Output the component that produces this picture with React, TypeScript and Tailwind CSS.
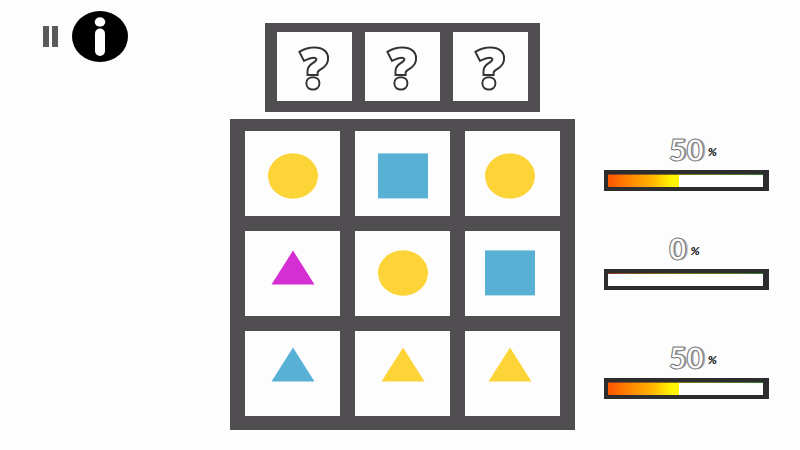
import React from "react";

type Kind = "circle" | "square" | "triangle";
type Tile = { kind: Kind; color: string };

const YELLOW = "#fdd437";
const BLUE = "#58b1d5";
const MAGENTA = "#d52fd3";

const tiles: Tile[] = [
  { kind: "circle", color: YELLOW },
  { kind: "square", color: BLUE },
  { kind: "circle", color: YELLOW },
  { kind: "triangle", color: MAGENTA },
  { kind: "circle", color: YELLOW },
  { kind: "square", color: BLUE },
  { kind: "triangle", color: BLUE },
  { kind: "triangle", color: YELLOW },
  { kind: "triangle", color: YELLOW },
];

const rowPadding = ["pt-[22px]", "pt-[19px]", "pt-4"];
const columnPadding = ["", "", "pr-[5px]"];

function Shape({ kind, color }: Tile) {
  return (
    <svg width="50" height="46" viewBox="0 0 50 46" fill={color} role="img" aria-label={kind}>
      {kind === "circle" && <ellipse cx="25" cy="23" rx="25" ry="22.8" />}
      {kind === "square" && <rect y="0.4" width="50" height="45" />}
      {kind === "triangle" && <path d="M25 0.5 46.5 34.5H3.5Z" />}
    </svg>
  );
}

function Mystery() {
  return (
    <div className="flex h-[69px] items-center justify-center bg-[#fefdfe]">
      <span className="font-['Open_Sans'] text-[54px] leading-[60px] font-extrabold text-white [paint-order:stroke_fill] [-webkit-text-stroke:4px_#333]">
        ?
      </span>
    </div>
  );
}

function Gauge({ value, name }: { value: number; name: string }) {
  return (
    <div className="flex w-[165px] flex-col">
      <div className="flex h-[26px] items-center pl-[65px]">
        <span className="font-['Lato'] text-[30px] leading-[26px] font-black text-[#fcfcfc] [-webkit-text-stroke:1px_#777] [text-shadow:1px_0_#999,2px_0_#bbb]">
          {value}
        </span>
        <span className="pt-1.5 pl-1 font-['Lato'] text-[12px] leading-5 font-black text-[#222] italic">
          %
        </span>
      </div>
      <div
        role="meter"
        aria-label={name}
        aria-valuemin={0}
        aria-valuemax={100}
        aria-valuenow={value}
        className="mt-2 h-[21px] border-4 border-r-[6px] border-[#2d2c2e] bg-white"
      >
        <div className="h-px bg-linear-to-r from-[#8c3c20] via-[#7c7a1c] via-50% to-[#2f7a2c]" />
        <div
          className="h-3 bg-linear-to-r from-[#ff5a00] from-5% via-[#ffb000] via-60% to-[#fff600] to-90%"
          style={{ width: `${value * 0.92}%` }}
        />
      </div>
    </div>
  );
}

export default function App() {
  return (
    <main className="grid min-h-screen grid-cols-[230fr_345px_225fr] items-start bg-[#fefdfe]">
      <nav className="flex items-center gap-3.5 pt-[11px] pl-[43px]">
        <button type="button" aria-label="Pause" className="flex h-[21px] w-[15px] justify-between">
          <span className="h-full w-1.5 bg-[#5b595b]" />
          <span className="h-full w-1.5 bg-[#5b595b]" />
        </button>
        <button type="button" aria-label="Information">
          <svg width="56" height="51" viewBox="0 0 56 51">
            <ellipse cx="28" cy="25.5" rx="28" ry="25.5" fill="#000" />
            <ellipse cx="28" cy="11" rx="5.3" ry="4.7" fill="#fff" />
            <rect x="23" y="17.5" width="10" height="27.5" rx="5" fill="#fff" />
          </svg>
        </button>
      </nav>

      <section className="flex flex-col items-center gap-[7px] pt-[23px]">
        <div className="grid w-[275px] grid-cols-3 gap-x-[13px] bg-[#504e50] px-3 pt-[9px] pb-[11px]">
          <Mystery />
          <Mystery />
          <Mystery />
        </div>
        <div className="grid w-full grid-cols-3 gap-[15px] bg-[#504e50] px-[15px] pt-3 pb-3.5">
          {tiles.map((tile, i) => (
            <div
              key={i}
              className={`flex h-[85px] justify-center bg-[#fefdfe] ${rowPadding[Math.floor(i / 3)]} ${columnPadding[i % 3]}`}
            >
              <Shape {...tile} />
            </div>
          ))}
        </div>
      </section>

      <aside className="flex flex-col pt-[136px] pl-[29px]">
        <Gauge value={50} name="First score" />
        <div className="pt-11 pb-[54px]">
          <Gauge value={0} name="Second score" />
        </div>
        <Gauge value={50} name="Third score" />
      </aside>
    </main>
  );
}
